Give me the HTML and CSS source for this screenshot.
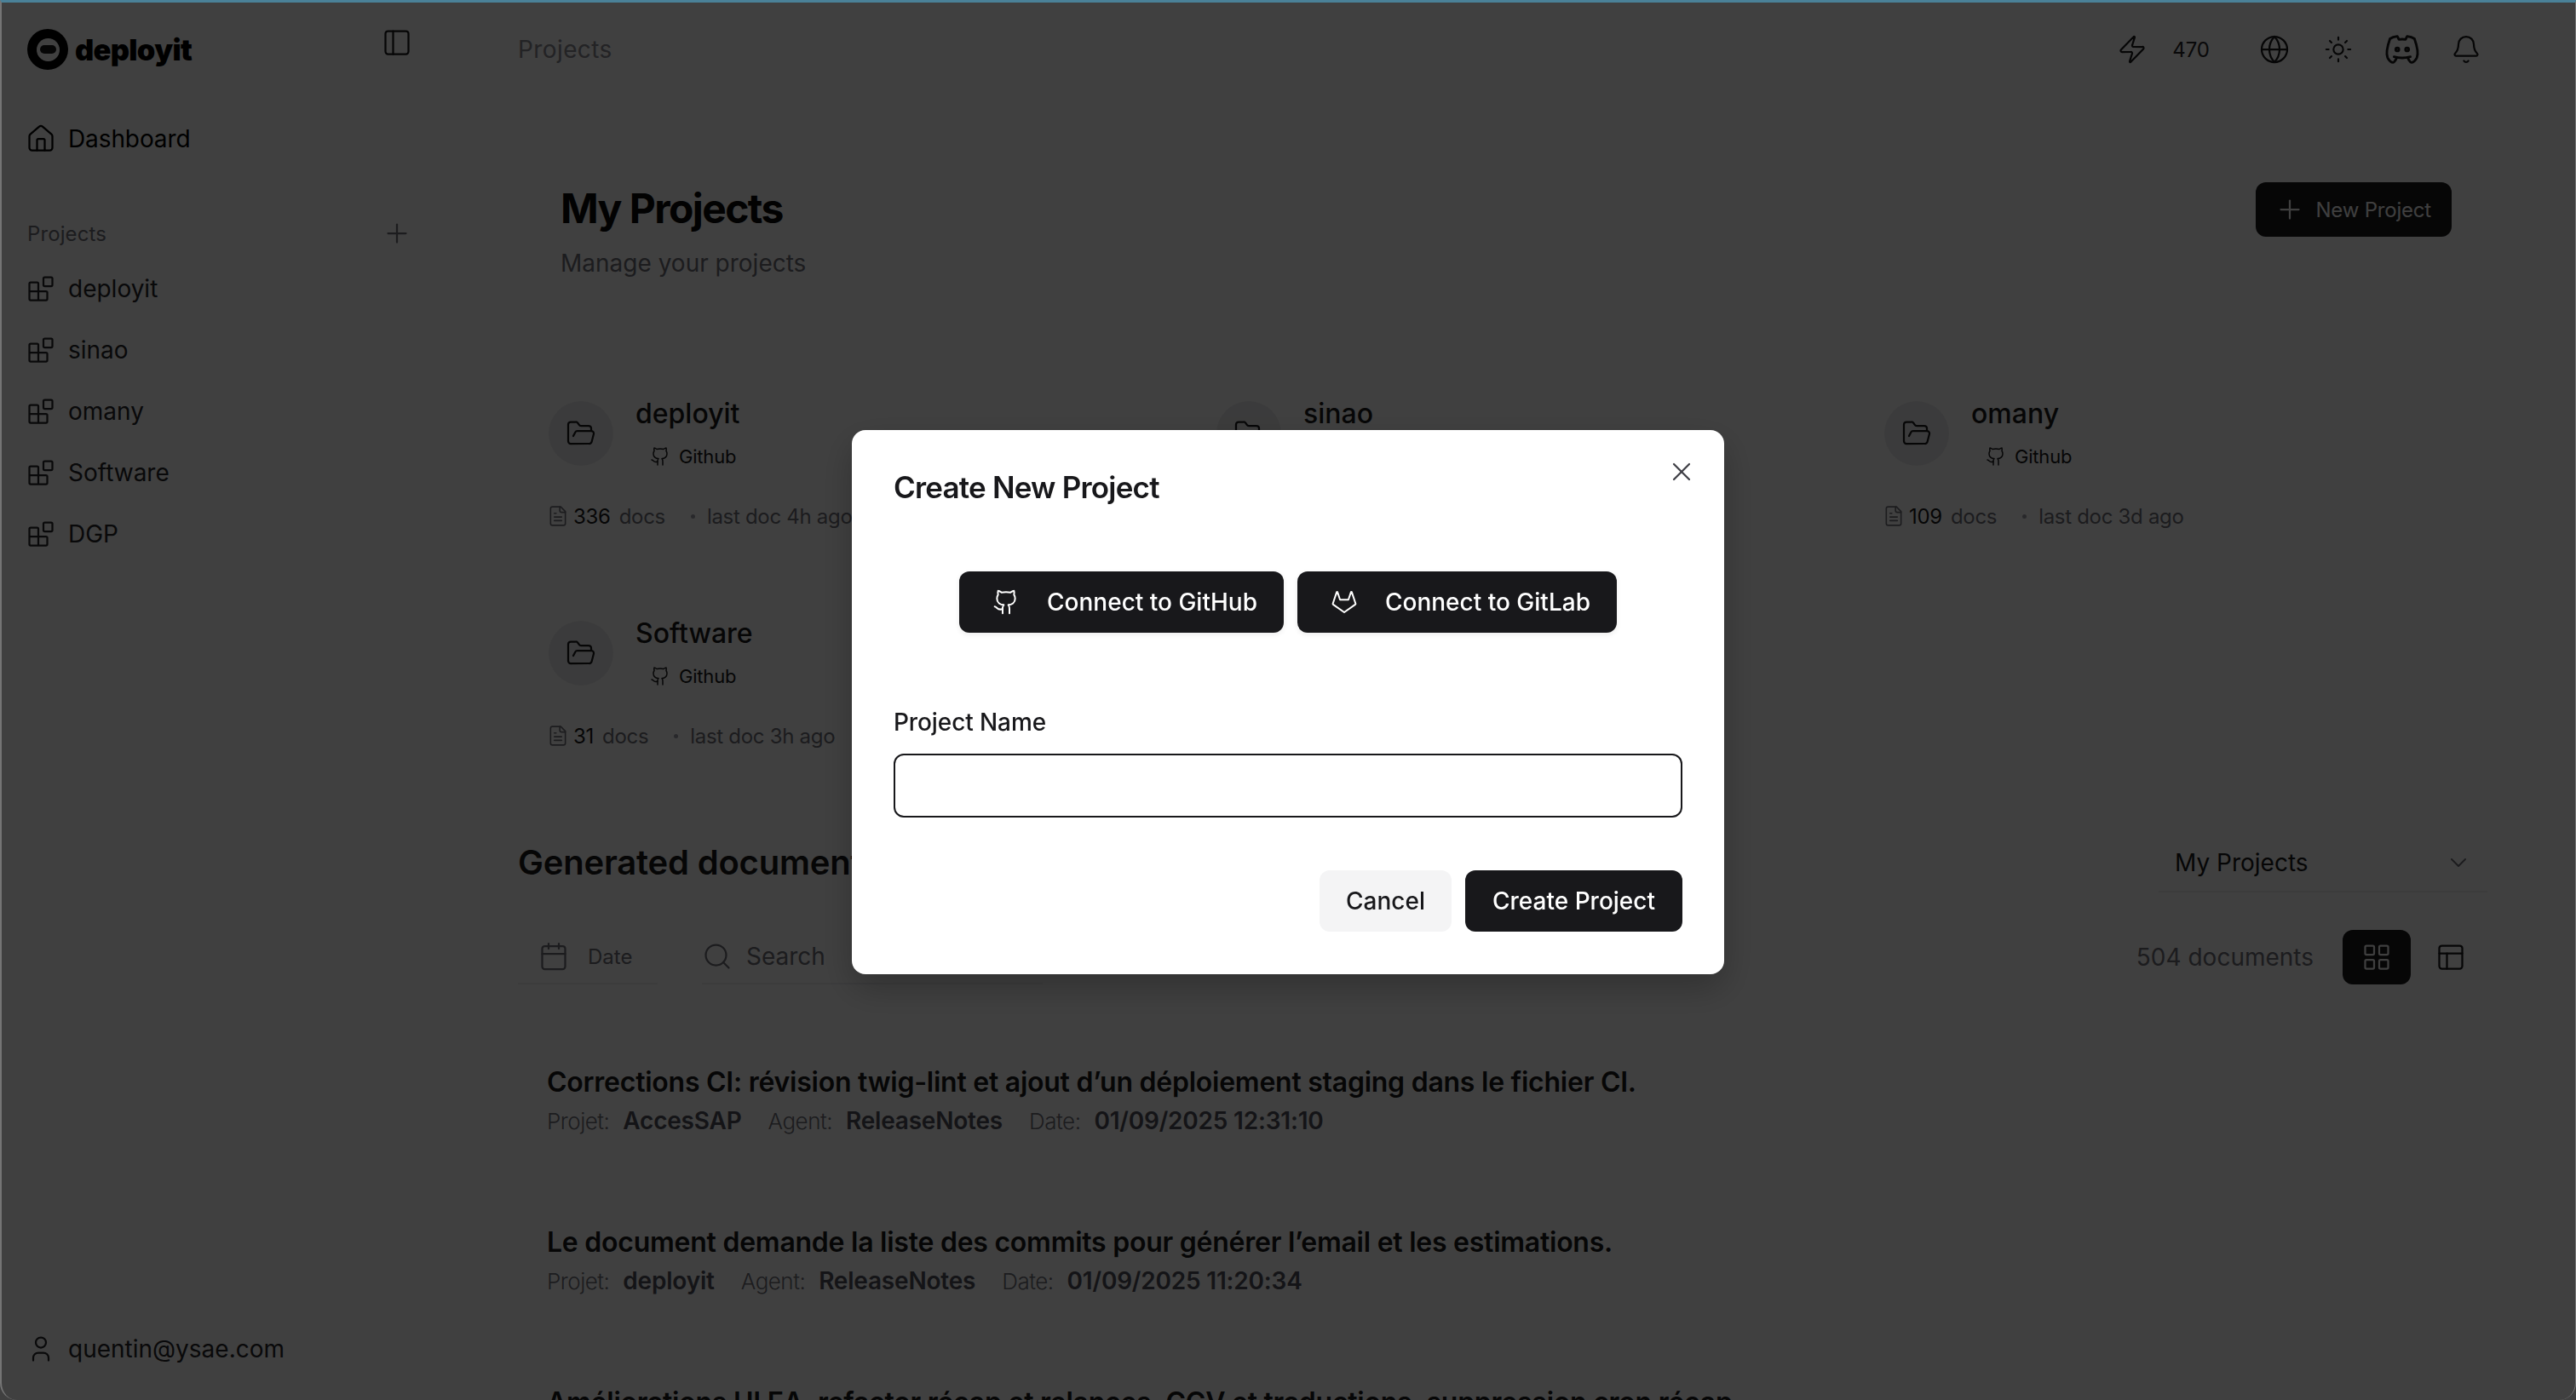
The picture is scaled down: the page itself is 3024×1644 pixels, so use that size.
FILE: index.html
```html
<!DOCTYPE html>
<html lang="en">
<head>
    <meta charset="UTF-8">
    <title>deployit - Projects</title>
    <link rel="stylesheet" href="styles.css">
</head>
<body>
    <svg class="sprites" xmlns="http://www.w3.org/2000/svg">
        <symbol id="i-home" viewBox="0 0 24 24"><path d="M15 21v-8a1 1 0 0 0-1-1h-4a1 1 0 0 0-1 1v8"/><path d="M3 10a2 2 0 0 1 .709-1.528l7-5.999a2 2 0 0 1 2.582 0l7 5.999A2 2 0 0 1 21 10v9a2 2 0 0 1-2 2H5a2 2 0 0 1-2-2z"/></symbol>
        <symbol id="i-blocks" viewBox="0 0 24 24"><rect width="7" height="7" x="14" y="3" rx="1"/><path d="M10 21V8a1 1 0 0 0-1-1H4a1 1 0 0 0-1 1v12a1 1 0 0 0 1 1h12a1 1 0 0 0 1-1v-5a1 1 0 0 0-1-1H3"/></symbol>
        <symbol id="i-panel" viewBox="0 0 24 24"><rect width="18" height="18" x="3" y="3" rx="2"/><path d="M9 3v18"/></symbol>
        <symbol id="i-plus" viewBox="0 0 24 24"><path d="M5 12h14"/><path d="M12 5v14"/></symbol>
        <symbol id="i-user" viewBox="0 0 24 24"><path d="M8 7a4 4 0 1 0 8 0a4 4 0 0 0-8 0"/><path d="M6 21v-2a4 4 0 0 1 4-4h4a4 4 0 0 1 4 4v2"/></symbol>
        <symbol id="i-zap" viewBox="0 0 24 24"><path d="M4 14a1 1 0 0 1-.78-1.63l9.9-10.2a.5.5 0 0 1 .86.46l-1.92 6.02A1 1 0 0 0 13 10h7a1 1 0 0 1 .78 1.63l-9.9 10.2a.5.5 0 0 1-.86-.46l1.92-6.02A1 1 0 0 0 11 14z"/></symbol>
        <symbol id="i-globe" viewBox="0 0 24 24"><circle cx="12" cy="12" r="10"/><path d="M12 2a14.5 14.5 0 0 0 0 20 14.5 14.5 0 0 0 0-20"/><path d="M2 12h20"/></symbol>
        <symbol id="i-sun" viewBox="0 0 24 24"><circle cx="12" cy="12" r="4"/><path d="M12 2v2M12 20v2M4.93 4.93l1.41 1.41M17.66 17.66l1.41 1.41M2 12h2M20 12h2M6.34 17.66l-1.41 1.41M19.07 4.93l-1.41 1.41"/></symbol>
        <symbol id="i-discord" viewBox="0 0 24 24"><path d="M8 12a1 1 0 1 0 2 0a1 1 0 0 0-2 0"/><path d="M14 12a1 1 0 1 0 2 0a1 1 0 0 0-2 0"/><path d="M15.5 17c0 1 1.5 3 2 3c1.5 0 2.833-1.667 3.5-3c.667-1.667 .5-5.833-1.5-11.5c-1.457-1.015-3-1.34-4.5-1.5l-.972 1.923a11.913 11.913 0 0 0-4.053 0l-.975-1.923c-1.5 .16-3.043 .485-4.5 1.5c-2 5.667-2.167 9.833-1.5 11.5c.667 1.333 2 3 3.5 3c.5 0 2-2 2-3"/><path d="M7 16.5c3.5 1 6.5 1 10 0"/></symbol>
        <symbol id="i-bell" viewBox="0 0 24 24"><path d="M10.268 21a2 2 0 0 0 3.464 0"/><path d="M3.262 15.326A1 1 0 0 0 4 17h16a1 1 0 0 0 .74-1.673C19.41 13.956 18 12.499 18 8A6 6 0 0 0 6 8c0 4.499-1.411 5.956-2.738 7.326"/></symbol>
        <symbol id="i-folder" viewBox="0 0 24 24"><path d="m6 14 1.5-2.9A2 2 0 0 1 9.24 10H20a2 2 0 0 1 1.94 2.5l-1.54 6a2 2 0 0 1-1.95 1.5H4a2 2 0 0 1-2-2V5a2 2 0 0 1 2-2h3.9a2 2 0 0 1 1.69.9l.81 1.2a2 2 0 0 0 1.67.9H18a2 2 0 0 1 2 2v2"/></symbol>
        <symbol id="i-github" viewBox="0 0 24 24"><path d="M15 22v-4a4.8 4.8 0 0 0-1-3.5c3 0 6-2 6-5.5.08-1.25-.27-2.48-1-3.5.28-1.15.28-2.35 0-3.5 0 0-1 0-3 1.5-2.64-.5-5.36-.5-8 0C6 2 5 2 5 2c-.3 1.15-.3 2.35 0 3.5A5.403 5.403 0 0 0 4 9c0 3.5 3 5.5 6 5.5-.39.49-.68 1.05-.85 1.65-.17.6-.22 1.23-.15 1.85v4"/><path d="M9 18c-4.51 2-5-2-7-2"/></symbol>
        <symbol id="i-gitlab" viewBox="0 0 24 24"><path d="m22 13.29-3.33-10a.42.42 0 0 0-.14-.18.38.38 0 0 0-.22-.11.39.39 0 0 0-.23.07.42.42 0 0 0-.14.18l-2.26 6.67H8.32L6.1 3.26a.42.42 0 0 0-.1-.18.38.38 0 0 0-.26-.08.39.39 0 0 0-.23.07.42.42 0 0 0-.14.18L2 13.29a.74.74 0 0 0 .27.83L12 21l9.69-6.88a.71.71 0 0 0 .31-.83Z"/></symbol>
        <symbol id="i-file" viewBox="0 0 24 24"><path d="M15 2H6a2 2 0 0 0-2 2v16a2 2 0 0 0 2 2h12a2 2 0 0 0 2-2V7Z"/><path d="M14 2v4a2 2 0 0 0 2 2h4"/><path d="M10 9H8"/><path d="M16 13H8"/><path d="M16 17H8"/></symbol>
        <symbol id="i-calendar" viewBox="0 0 24 24"><path d="M8 2v4"/><path d="M16 2v4"/><rect width="18" height="18" x="3" y="4" rx="2"/><path d="M3 10h18"/></symbol>
        <symbol id="i-search" viewBox="0 0 24 24"><circle cx="11" cy="11" r="8"/><path d="m21 21-4.3-4.3"/></symbol>
        <symbol id="i-chevron" viewBox="0 0 24 24"><path d="m6 9 6 6 6-6"/></symbol>
        <symbol id="i-grid" viewBox="0 0 24 24"><rect width="7" height="7" x="3" y="3" rx="1"/><rect width="7" height="7" x="14" y="3" rx="1"/><rect width="7" height="7" x="14" y="14" rx="1"/><rect width="7" height="7" x="3" y="14" rx="1"/></symbol>
        <symbol id="i-table" viewBox="0 0 24 24"><rect width="18" height="18" x="3" y="3" rx="2"/><path d="M3 9h18"/><path d="M9 21V9"/></symbol>
        <symbol id="i-close" viewBox="0 0 24 24"><path d="M18 6 6 18"/><path d="m6 6 12 12"/></symbol>
    </svg>

    <div class="app">
        <aside class="sidebar">
            <div class="side-head">
                <div class="logo">
                    <span class="logo-mark"><span class="logo-face"><span class="logo-eyes"></span></span></span>
                    <span class="logo-txt">deployit</span>
                </div>
                <svg class="icon side-toggle"><use href="#i-panel"/></svg>
            </div>

            <a class="side-item side-dash"><svg class="icon"><use href="#i-home"/></svg>Dashboard</a>

            <div class="side-label">
                <span>Projects</span>
                <svg class="icon"><use href="#i-plus"/></svg>
            </div>
            <a class="side-item"><svg class="icon"><use href="#i-blocks"/></svg>deployit</a>
            <a class="side-item"><svg class="icon"><use href="#i-blocks"/></svg>sinao</a>
            <a class="side-item"><svg class="icon"><use href="#i-blocks"/></svg>omany</a>
            <a class="side-item"><svg class="icon"><use href="#i-blocks"/></svg>Software</a>
            <a class="side-item"><svg class="icon"><use href="#i-blocks"/></svg>DGP</a>

            <a class="side-item side-user"><svg class="icon"><use href="#i-user"/></svg>quentin@ysae.com</a>
        </aside>

        <main class="main">
            <header class="topbar">
                <span class="crumb">Projects</span>
                <div class="top-actions">
                    <svg class="icon"><use href="#i-zap"/></svg>
                    <span class="credits">470</span>
                    <span class="top-btn"><svg class="icon"><use href="#i-globe"/></svg></span>
                    <span class="top-btn"><svg class="icon icon-sun"><use href="#i-sun"/></svg></span>
                    <span class="top-btn"><svg class="icon icon-discord"><use href="#i-discord"/></svg></span>
                    <span class="top-btn"><svg class="icon"><use href="#i-bell"/></svg></span>
                </div>
            </header>

            <section class="page-head">
                <div>
                    <h1 class="page-title">My Projects</h1>
                    <p class="page-desc">Manage your projects</p>
                </div>
                <a class="btn-new"><svg class="icon"><use href="#i-plus"/></svg>New Project</a>
            </section>

            <section class="cards">
                <article class="card">
                    <div class="card-top">
                        <span class="card-icon"><svg class="icon"><use href="#i-folder"/></svg></span>
                        <div>
                            <div class="card-name">deployit</div>
                            <div class="card-badge"><svg class="icon"><use href="#i-github"/></svg>Github</div>
                        </div>
                    </div>
                    <div class="card-stats">
                        <svg class="icon"><use href="#i-file"/></svg>
                        <b>336</b><span>docs</span><i class="dot"></i><span>last doc 4h ago</span>
                    </div>
                </article>
                <article class="card">
                    <div class="card-top">
                        <span class="card-icon"><svg class="icon"><use href="#i-folder"/></svg></span>
                        <div>
                            <div class="card-name">sinao</div>
                            <div class="card-badge"><svg class="icon"><use href="#i-github"/></svg>Github</div>
                        </div>
                    </div>
                </article>
                <article class="card">
                    <div class="card-top">
                        <span class="card-icon"><svg class="icon"><use href="#i-folder"/></svg></span>
                        <div>
                            <div class="card-name">omany</div>
                            <div class="card-badge"><svg class="icon"><use href="#i-github"/></svg>Github</div>
                        </div>
                    </div>
                    <div class="card-stats">
                        <svg class="icon"><use href="#i-file"/></svg>
                        <b>109</b><span>docs</span><i class="dot"></i><span>last doc 3d ago</span>
                    </div>
                </article>
                <article class="card">
                    <div class="card-top">
                        <span class="card-icon"><svg class="icon"><use href="#i-folder"/></svg></span>
                        <div>
                            <div class="card-name">Software</div>
                            <div class="card-badge"><svg class="icon"><use href="#i-github"/></svg>Github</div>
                        </div>
                    </div>
                    <div class="card-stats">
                        <svg class="icon"><use href="#i-file"/></svg>
                        <b>31</b><span>docs</span><i class="dot"></i><span>last doc 3h ago</span>
                    </div>
                </article>
            </section>

            <section class="docs-head">
                <h2 class="docs-title">Generated documents</h2>
                <div class="select">My Projects<svg class="icon"><use href="#i-chevron"/></svg></div>
            </section>

            <section class="toolbar">
                <div class="filter filter-date"><svg class="icon"><use href="#i-calendar"/></svg>Date</div>
                <div class="filter filter-search"><svg class="icon"><use href="#i-search"/></svg>Search</div>
                <span class="doc-count">504 documents</span>
                <span class="view-btn active"><svg class="icon"><use href="#i-grid"/></svg></span>
                <span class="view-btn"><svg class="icon"><use href="#i-table"/></svg></span>
            </section>

            <section class="doc-list">
                <article class="doc">
                    <div class="doc-title">Corrections CI: révision twig-lint et ajout d’un déploiement staging dans le fichier CI.</div>
                    <div class="doc-meta">
                        <span><span class="meta-label">Projet:</span> <b>AccesSAP</b></span>
                        <span><span class="meta-label">Agent:</span> <b>ReleaseNotes</b></span>
                        <span><span class="meta-label">Date:</span> <b>01/09/2025 12:31:10</b></span>
                    </div>
                </article>
                <article class="doc">
                    <div class="doc-title">Le document demande la liste des commits pour générer l’email et les estimations.</div>
                    <div class="doc-meta">
                        <span><span class="meta-label">Projet:</span> <b>deployit</b></span>
                        <span><span class="meta-label">Agent:</span> <b>ReleaseNotes</b></span>
                        <span><span class="meta-label">Date:</span> <b>01/09/2025 11:20:34</b></span>
                    </div>
                </article>
                <article class="doc">
                    <div class="doc-title">Améliorations UI EA, refactor récap et relances, CCV et traductions, suppression cron récap</div>
                </article>
            </section>
        </main>
    </div>

    <div class="overlay">
        <div class="modal">
            <svg class="icon modal-close"><use href="#i-close"/></svg>
            <h3 class="modal-title">Create New Project</h3>
            <div class="connect-row">
                <a class="btn btn-connect"><svg class="icon"><use href="#i-github"/></svg>Connect to GitHub</a>
                <a class="btn btn-connect"><svg class="icon"><use href="#i-gitlab"/></svg>Connect to GitLab</a>
            </div>
            <label class="field-label" for="project-name">Project Name</label>
            <input class="field-input" id="project-name" type="text">
            <div class="modal-actions">
                <a class="btn btn-cancel">Cancel</a>
                <a class="btn btn-create">Create Project</a>
            </div>
        </div>
    </div>

    <div class="frame"></div>
</body>
</html>
```

FILE: styles.css
```css
* {
    box-sizing: border-box;
}

html, body {
    margin: 0;
    height: 100%;
    overflow: hidden;
}

body {
    font-family: Inter, "Noto Sans", sans-serif;
    color: #18181b;
    background-color: #fff;
}

h1, h2, h3, p {
    margin: 0;
}

.sprites {
    display: none;
}

.icon {
    display: block;
    flex: none;
    width: 36px;
    height: 36px;
    fill: none;
    stroke: currentColor;
    stroke-width: 1.5;
    stroke-linecap: round;
    stroke-linejoin: round;
}

.app {
    display: flex;
    height: 1644px;
    overflow: hidden;
}

/* sidebar */
.sidebar {
    display: flex;
    flex-direction: column;
    flex: none;
    width: 540px;
    height: 100%;
    padding: 34px 56px 24px 32px;
}

.side-head {
    display: flex;
    justify-content: space-between;
    align-items: flex-start;
    height: 48px;
    margin-bottom: 45px;
}

.side-toggle {
    margin-top: -2px;
}

.logo {
    display: flex;
    align-items: center;
    gap: 8px;
}

.logo-mark {
    display: flex;
    align-items: center;
    justify-content: center;
    width: 48px;
    height: 48px;
    border-radius: 50%;
    background-color: #000;
}

.logo-face {
    display: flex;
    align-items: center;
    justify-content: center;
    width: 27px;
    height: 27px;
    border-radius: 50%;
    background-color: #fff;
}

.logo-eyes {
    width: 19px;
    height: 10px;
    border-radius: 5px;
    background-color: #18181b;
}

.logo-txt {
    font-size: 34.5px;
    font-weight: 900;
    letter-spacing: -.7px;
    color: #000;
}

.side-item {
    display: flex;
    align-items: center;
    gap: 14px;
    height: 72px;
    font-size: 28px;
    color: #27272a;
}

.side-item .icon {
    margin-left: -2px;
}

.side-dash {
    color: #000;
    letter-spacing: -.1px;
}

.side-label {
    display: flex;
    justify-content: space-between;
    align-items: center;
    height: 48px;
    margin-top: 51px;
    margin-bottom: 5px;
    font-size: 24px;
    letter-spacing: .1px;
    color: #71717a;
}

.side-user {
    margin-top: auto;
}

/* main column */
.main {
    flex: 1;
    min-width: 0;
    padding: 0 92px 0 68px;
}

.topbar {
    display: flex;
    justify-content: space-between;
    align-items: center;
    height: 116px;
}

.crumb {
    font-size: 28px;
    letter-spacing: .4px;
    color: #8a8a92;
}

.top-actions {
    display: flex;
    align-items: center;
}

.credits {
    margin: 0 38px 0 29px;
    font-size: 24px;
    color: #27272a;
}

.top-btn {
    display: flex;
    justify-content: center;
    width: 75px;
}

.top-btn .icon-discord {
    width: 46px;
    height: 46px;
}

.top-btn .icon-sun {
    width: 34px;
    height: 34px;
}

.page-head {
    display: flex;
    justify-content: space-between;
    align-items: flex-start;
    padding: 98px 54px 0 50px;
}

.page-title {
    font-size: 48px;
    font-weight: 700;
    line-height: 56px;
    height: 56px;
    margin-top: 3px;
    letter-spacing: -1.6px;
    color: #09090b;
}

.page-desc {
    margin-top: 16px;
    font-size: 28px;
    line-height: 40px;
    color: #71717a;
}

.btn-new {
    display: flex;
    align-items: center;
    gap: 12px;
    height: 64px;
    padding: 0 24px 0 22px;
    font-size: 24px;
    letter-spacing: -.2px;
    color: #fafafa;
    background-color: #18181b;
    border-radius: 12px;
}

.cards {
    display: grid;
    grid-template-columns: repeat(3, 784px);
    grid-auto-rows: 156px;
    row-gap: 102px;
    margin-top: 137px;
    padding-left: 36px;
}

.card-top {
    display: flex;
    align-items: center;
    gap: 26px;
    height: 86px;
}

.card-icon {
    display: flex;
    align-items: center;
    justify-content: center;
    width: 76px;
    height: 76px;
    border-radius: 50%;
    background-color: #ececee;
}

.card-name {
    font-size: 32px;
    font-weight: 500;
    line-height: 40px;
}

.card-badge {
    display: flex;
    align-items: center;
    gap: 10px;
    height: 32px;
    margin-top: 14px;
    padding-left: 17px;
    font-size: 22px;
    letter-spacing: -.2px;
}

.card-badge .icon {
    width: 24px;
    height: 24px;
}

.card-stats {
    display: flex;
    align-items: center;
    height: 32px;
    margin-top: 38px;
    font-size: 24px;
    letter-spacing: -.3px;
    color: #71717a;
}

.card-stats .icon {
    width: 26px;
    height: 26px;
    margin-left: -2px;
    margin-right: 5px;
}

.card-stats b {
    font-weight: 400;
    color: #18181b;
    margin-right: 10px;
}

.dot {
    width: 5px;
    height: 5px;
    margin: 0 14px 0 30px;
    border-radius: 50%;
    background-color: #a1a1aa;
}

.docs-head {
    display: flex;
    justify-content: space-between;
    align-items: center;
    height: 56px;
    margin-top: 104px;
    padding-right: 12px;
}

.docs-title {
    font-size: 40px;
    font-weight: 600;
    letter-spacing: -.2px;
}

.select {
    display: flex;
    justify-content: space-between;
    align-items: center;
    flex: none;
    width: 386px;
    height: 72px;
    padding: 3px 18px 0 19px;
    font-size: 28px;
    border-bottom: 2px solid #eeeef0;
}

.select .icon {
    width: 32px;
    height: 32px;
    color: #71717a;
}

.toolbar {
    display: flex;
    align-items: center;
    height: 64px;
    margin-top: 52px;
    padding-right: 15px;
}

.filter {
    display: flex;
    align-items: center;
    height: 64px;
    color: #71717a;
    border-bottom: 2px solid #eeeef0;
}

.filter-date {
    gap: 22px;
    width: 164px;
    padding-left: 24px;
    font-size: 24px;
}

.filter-search {
    gap: 16px;
    width: 400px;
    margin-left: 52px;
    font-size: 28px;
}

.doc-count {
    margin-left: auto;
    margin-right: 34px;
    font-size: 28px;
    color: #71717a;
}

.view-btn {
    display: flex;
    align-items: center;
    justify-content: center;
    width: 80px;
    height: 64px;
    margin-left: 7px;
    border-radius: 12px;
}

.view-btn.active {
    margin-left: 0;
    color: #fafafa;
    background-color: #18181b;
}

.doc-list {
    display: flex;
    flex-direction: column;
    gap: 101px;
    margin-top: 93px;
    padding-left: 34px;
}

.doc {
    height: 87px;
}

.doc-title {
    font-size: 32px;
    font-weight: 600;
    letter-spacing: -.25px;
    line-height: 44px;
    white-space: nowrap;
}

.doc-meta {
    display: flex;
    gap: 31px;
    margin-top: 3px;
    font-size: 28px;
    line-height: 40px;
    color: #71717a;
}

.meta-label {
    margin-right: 8px;
    font-size: 26px;
    font-weight: 300;
    letter-spacing: -.5px;
}

.doc-meta b {
    font-weight: 600;
    letter-spacing: -.2px;
    color: #52525b;
}

/* dialog */
.overlay {
    position: fixed;
    inset: 0;
    display: flex;
    align-items: flex-start;
    justify-content: center;
    padding-top: 505px;
    background-color: rgba(0, 0, 0, .75);
}

.modal {
    position: relative;
    width: 1024px;
    height: 639px;
    padding: 43px 49px 0;
    background-color: #fff;
    border-radius: 16px;
    box-shadow: 0 16px 40px rgba(0, 0, 0, .25);
}

.modal-close {
    position: absolute;
    top: 31px;
    right: 32px;
    color: #3f3f46;
}

.modal-title {
    font-size: 35px;
    font-weight: 600;
    letter-spacing: -.8px;
    line-height: 48px;
}

.connect-row {
    display: flex;
    justify-content: center;
    gap: 16px;
    margin-top: 75px;
}

.btn {
    display: flex;
    align-items: center;
    height: 72px;
    font-size: 28px;
    font-weight: 500;
    border-radius: 12px;
}

.btn-connect {
    gap: 32px;
    padding: 0 31px 0 39px;
    color: #fff;
    background-color: #18181b;
    box-shadow: 0 2px 6px rgba(0, 0, 0, .08);
}

.btn-connect .icon {
    width: 32px;
    height: 32px;
}

.field-label {
    display: block;
    margin-top: 85px;
    font-size: 28px;
    font-weight: 500;
    letter-spacing: -.1px;
    line-height: 40px;
}

.field-input {
    display: block;
    width: 100%;
    height: 75px;
    margin-top: 17px;
    border: 2.5px solid #18181b;
    border-radius: 12px;
    background-color: #fff;
    outline: none;
}

.modal-actions {
    display: flex;
    justify-content: flex-end;
    gap: 16px;
    margin-top: 62px;
}

.btn-cancel {
    padding: 0 31px;
    background-color: #f4f4f5;
}

.btn-create {
    padding: 0 32px;
    color: #fff;
    background-color: #18181b;
}

/* edge of the captured window */
.frame {
    position: fixed;
    inset: 0;
    border-top: 3px solid #4a8198;
    border-left: 2px solid #757575;
    border-right: 1px solid #757575;
    border-radius: 0 0 20px 20px;
    pointer-events: none;
}
```
